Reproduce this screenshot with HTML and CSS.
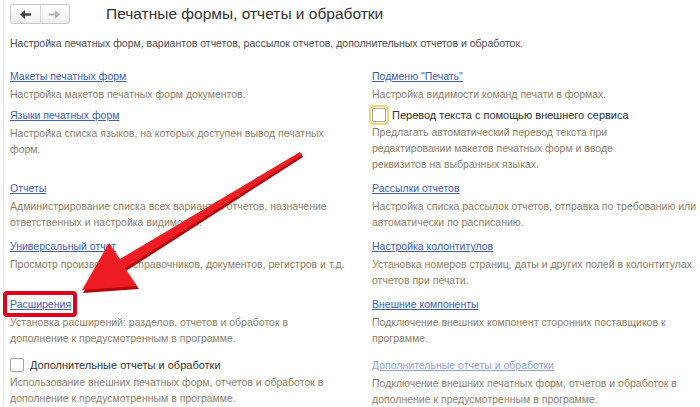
FILE: index.html
```html
<!DOCTYPE html>
<html lang="ru">
<head>
    <meta charset="UTF-8">
    <title>Печатные формы, отчеты и обработки</title>
    <link rel="stylesheet" href="styles.css">
</head>
<body>
    <div class="page">
        <div class="header">
            <div class="nav">
                <span class="nav-btn">
                    <svg width="11" height="9" viewBox="0 0 11 9"><path d="M0 4.5 L5 0 V3.3 H11 V5.7 H5 V9 Z" fill="#454545"/></svg>
                </span>
                <span class="nav-btn">
                    <svg width="11" height="9" viewBox="0 0 11 9"><path d="M11 4.5 L6 0 V3.6 H0 V5.4 H6 V9 Z" fill="#b5b5b5"/></svg>
                </span>
            </div>
            <h1>Печатные формы, отчеты и обработки</h1>
        </div>
        <p class="intro">Настройка печатных форм, вариантов отчетов, рассылок отчетов, дополнительных отчетов и обработок.</p>

        <div class="grid">
            <div class="item first">
                <a href="#">Макеты печатных форм</a>
                <p>Настройка макетов печатных форм документов.</p>
            </div>
            <div class="item first">
                <a href="#">Подменю "Печать"</a>
                <p>Настройка видимости команд печати в формах.</p>
            </div>

            <div class="item">
                <a href="#">Языки печатных форм</a>
                <p>Настройка списка языков, на которых доступен вывод печатных форм.</p>
            </div>
            <div class="item">
                <label class="check"><span class="box focused"></span>Перевод текста с помощью внешнего сервиса</label>
                <p class="narrow">Предлагать автоматический перевод текста при редактировании макетов печатных форм и вводе реквизитов на выбранных языках.</p>
            </div>

            <div class="item">
                <a href="#">Отчеты</a>
                <p>Администрирование списка всех вариантов отчетов, назначение ответственных и настройка видимости.</p>
            </div>
            <div class="item">
                <a href="#">Рассылки отчетов</a>
                <p>Настройка списка рассылок отчетов, отправка по требованию или автоматически по расписанию.</p>
            </div>

            <div class="item">
                <a href="#">Универсальный отчет</a>
                <p class="wide">Просмотр произвольных справочников, документов, регистров и т.д.</p>
            </div>
            <div class="item">
                <a href="#">Настройка колонтитулов</a>
                <p>Установка номеров страниц, даты и других полей в колонтитулах отчетов при печати.</p>
            </div>

            <div class="item">
                <a href="#" class="marked">Расширения</a>
                <p>Установка расширений: разделов, отчетов и обработок в дополнение к предусмотренным в программе.</p>
            </div>
            <div class="item">
                <a href="#">Внешние компоненты</a>
                <p>Подключение внешних компонент сторонних поставщиков к программе.</p>
            </div>

            <div class="item last">
                <label class="check"><span class="box"></span>Дополнительные отчеты и обработки</label>
                <p>Использование внешних печатных форм, отчетов и обработок в дополнение к предусмотренным в программе.</p>
            </div>
            <div class="item last">
                <a href="#" class="disabled">Дополнительные отчеты и обработки</a>
                <p>Подключение внешних печатных форм, отчетов и обработок в дополнение к предусмотренным в программе.</p>
            </div>
        </div>
    </div>

    <!-- red pointer drawn over the page -->
    <svg class="pointer" width="700" height="407" viewBox="0 0 700 407">
        <polygon fill="#b3060c" points="303,157 126,271 139,289 83,293 110,246 121,262 301,153"/>
        <polygon fill="#ee1c24" points="302,155 125,268 137,286 82,290 109,243 120,259 300,152"/>
    </svg>
</body>
</html>
```

FILE: styles.css
```css
body {
    font-family: "Liberation Sans", Arial, sans-serif;
    font-size: 10.5px;
    color: #4d4d4d;
    background-color: #fff;
    margin: 0;
    padding: 0;
}
.page {
    margin-left: 3px;
    padding-left: 6px;
    border-left: 1px solid #e6e6e6;
    min-height: 407px;
}
.header {
    display: flex;
    align-items: center;
    padding-top: 3px;
}
.nav {
    display: flex;
    width: 60px;
    height: 20px;
    border: 1px solid #c9c9c9;
    border-radius: 3px;
    background: linear-gradient(#ffffff, #f0f0f0);
    box-sizing: border-box;
}
.nav-btn {
    flex: 1;
    display: flex;
    align-items: center;
    justify-content: center;
}
.nav-btn + .nav-btn {
    border-left: 1px solid #dcdcdc;
}
.header h1 {
    margin: 0 0 0 36px;
    font-size: 15.5px;
    font-weight: normal;
    color: #333;
    line-height: 22px;
}
.intro {
    margin: 10px 0 0;
    line-height: 16px;
}
.grid {
    display: grid;
    grid-template-columns: 362px 1fr;
    row-gap: 8px;
    margin-top: 17px;
}
.item.first {
    margin-bottom: -3px;
}
.item.last {
    margin-top: 3px;
}
.item a {
    display: inline-block;
    color: #3e5dbb;
    line-height: 16px;
    margin-bottom: 2px;
}
.item a.disabled {
    color: #8fa0d6;
}
.item p {
    margin: 0;
    color: #8d7f6b;
    line-height: 16px;
    max-width: 330px;
}
.item p.narrow {
    max-width: 280px;
}
.item p.wide {
    max-width: none;
}
.check {
    display: flex;
    align-items: center;
    color: #333;
    font-size: 11px;
    height: 16px;
    margin-bottom: 1px;
}
.box {
    width: 12px;
    height: 12px;
    border: 1px solid #a5a5a5;
    border-radius: 2px;
    background: #fff;
    margin-right: 6px;
}
.box.focused {
    outline: 2px solid #f5d46a;
    outline-offset: 1px;
}
.marked {
    position: relative;
}
.marked::after {
    content: "";
    position: absolute;
    left: -7px;
    right: -6px;
    top: -5px;
    bottom: -5px;
    border: 4px solid #e3001b;
    border-radius: 4px;
}
.pointer {
    position: absolute;
    top: 0;
    left: 0;
    pointer-events: none;
}
```
